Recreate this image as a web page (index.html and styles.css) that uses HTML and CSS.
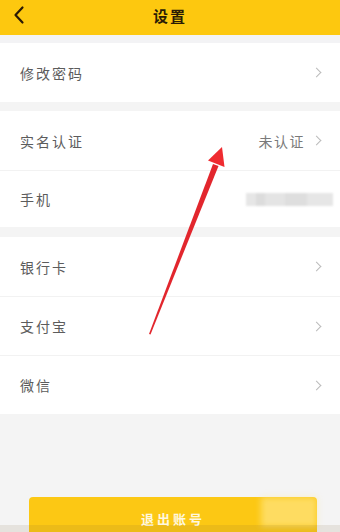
FILE: index.html
```html
<!DOCTYPE html>
<html lang="zh-CN">
<head>
<meta charset="utf-8">
<link rel="stylesheet" href="styles.css">
</head>
<body>
<div class="page">
  <header class="topbar">
    <svg class="back" width="14" height="20" viewBox="0 0 14 20"><path d="M10.5 2.5 L3.5 10 L10.5 17.5" fill="none" stroke="#2a1a05" stroke-width="2.2" stroke-linecap="round" stroke-linejoin="round"/></svg>
    <h1 class="title">设置</h1>
  </header>
  <div class="gap g1"></div>
  <section class="group">
    <div class="row row-tall"><span class="label">修改密码</span><span class="chev"></span></div>
  </section>
  <div class="gap g2"></div>
  <section class="group">
    <div class="row"><span class="label">实名认证</span><span class="value">未认证</span><span class="chev"></span></div>
    <div class="row row-short"><span class="label">手机</span><span class="blur"></span></div>
  </section>
  <div class="gap g3"></div>
  <section class="group">
    <div class="row"><span class="label">银行卡</span><span class="chev"></span></div>
    <div class="row"><span class="label">支付宝</span><span class="chev"></span></div>
    <div class="row"><span class="label">微信</span><span class="chev"></span></div>
  </section>
  <div class="filler">
    <button class="logout">退出账号<span class="mark"></span></button>
  </div>
  <div class="edge"></div>
  <svg class="arrow" width="340" height="532" viewBox="0 0 340 532">
    <path d="M149 334 L213 164 L218.5 166 L150.5 334.5 Z" fill="#e2262d"/>
    <path d="M222 147 L224.5 167 L208 160.5 Z" fill="#ef2b30"/>
  </svg>
</div>
</body>
</html>
```

FILE: styles.css
```css
* { box-sizing: border-box; margin: 0; padding: 0; }
html, body { width: 340px; height: 532px; overflow: hidden; }
body { font-family: "Noto Sans CJK SC", "Noto Sans", sans-serif; background: #f4f4f4; }
.page { position: relative; width: 340px; height: 532px; display: flex; flex-direction: column; }
.topbar { height: 35px; background: #fdc80f; display: flex; align-items: center; justify-content: center; position: relative; flex: none; }
.back { position: absolute; left: 12px; top: 5px; }
.title { font-size: 15px; font-weight: 700; color: #2a1c05; letter-spacing: 2px; margin-top: -5px; }
.gap { flex: none; background: #f3f3f5; }
.g1 { height: 8px; }
.g2 { height: 9px; background: #f4f4f4; }
.g3 { height: 10px; background: #f4f4f4; }
.group { background: #fff; flex: none; }
.row { height: 59px; display: flex; align-items: center; padding: 0 16px 0 20px; border-top: 1px solid #f2f2f2; }
.row:first-child { border-top: none; height: 59px; }
.row-tall { height: 60px; }
.row-short { height: 57px; }
.label { font-size: 14px; color: #5c5c5c; letter-spacing: 2px; flex: 1; }
.value { font-size: 14px; color: #7a7a7a; letter-spacing: 1.5px; margin-right: 8px; }
.chev { width: 7px; height: 7px; border-top: 1.2px solid #bbb; border-right: 1.2px solid #bbb; transform: rotate(45deg); margin-right: 4px; }
.blur { width: 87px; height: 13px; background: linear-gradient(90deg, #e6e6e6 0 12%, #dcdcdc 12% 22%, #e4e4e4 22% 45%, #dedede 45% 70%, #e6e6e6 70%); filter: blur(1px); margin-right: -9px; }
.filler { flex: 1; display: flex; align-items: flex-end; padding-left: 29px; }
.logout { position: relative; width: 288px; height: 35px; border: none; border-radius: 4px 4px 0 0; background: #fcc814; color: #fff8e0; font-family: "Noto Sans CJK SC", sans-serif; font-size: 13px; font-weight: 700; letter-spacing: 3px; display: flex; justify-content: center; padding-top: 12px; }
.mark { position: absolute; right: 0; top: 0; width: 56px; height: 30px; background: rgba(255, 236, 160, 0.55); filter: blur(3px); }
.edge { position: absolute; left: 0; bottom: 0; width: 340px; height: 7px; background: rgba(120, 100, 60, 0.12); }
.arrow { position: absolute; left: 0; top: 0; pointer-events: none; }
```
